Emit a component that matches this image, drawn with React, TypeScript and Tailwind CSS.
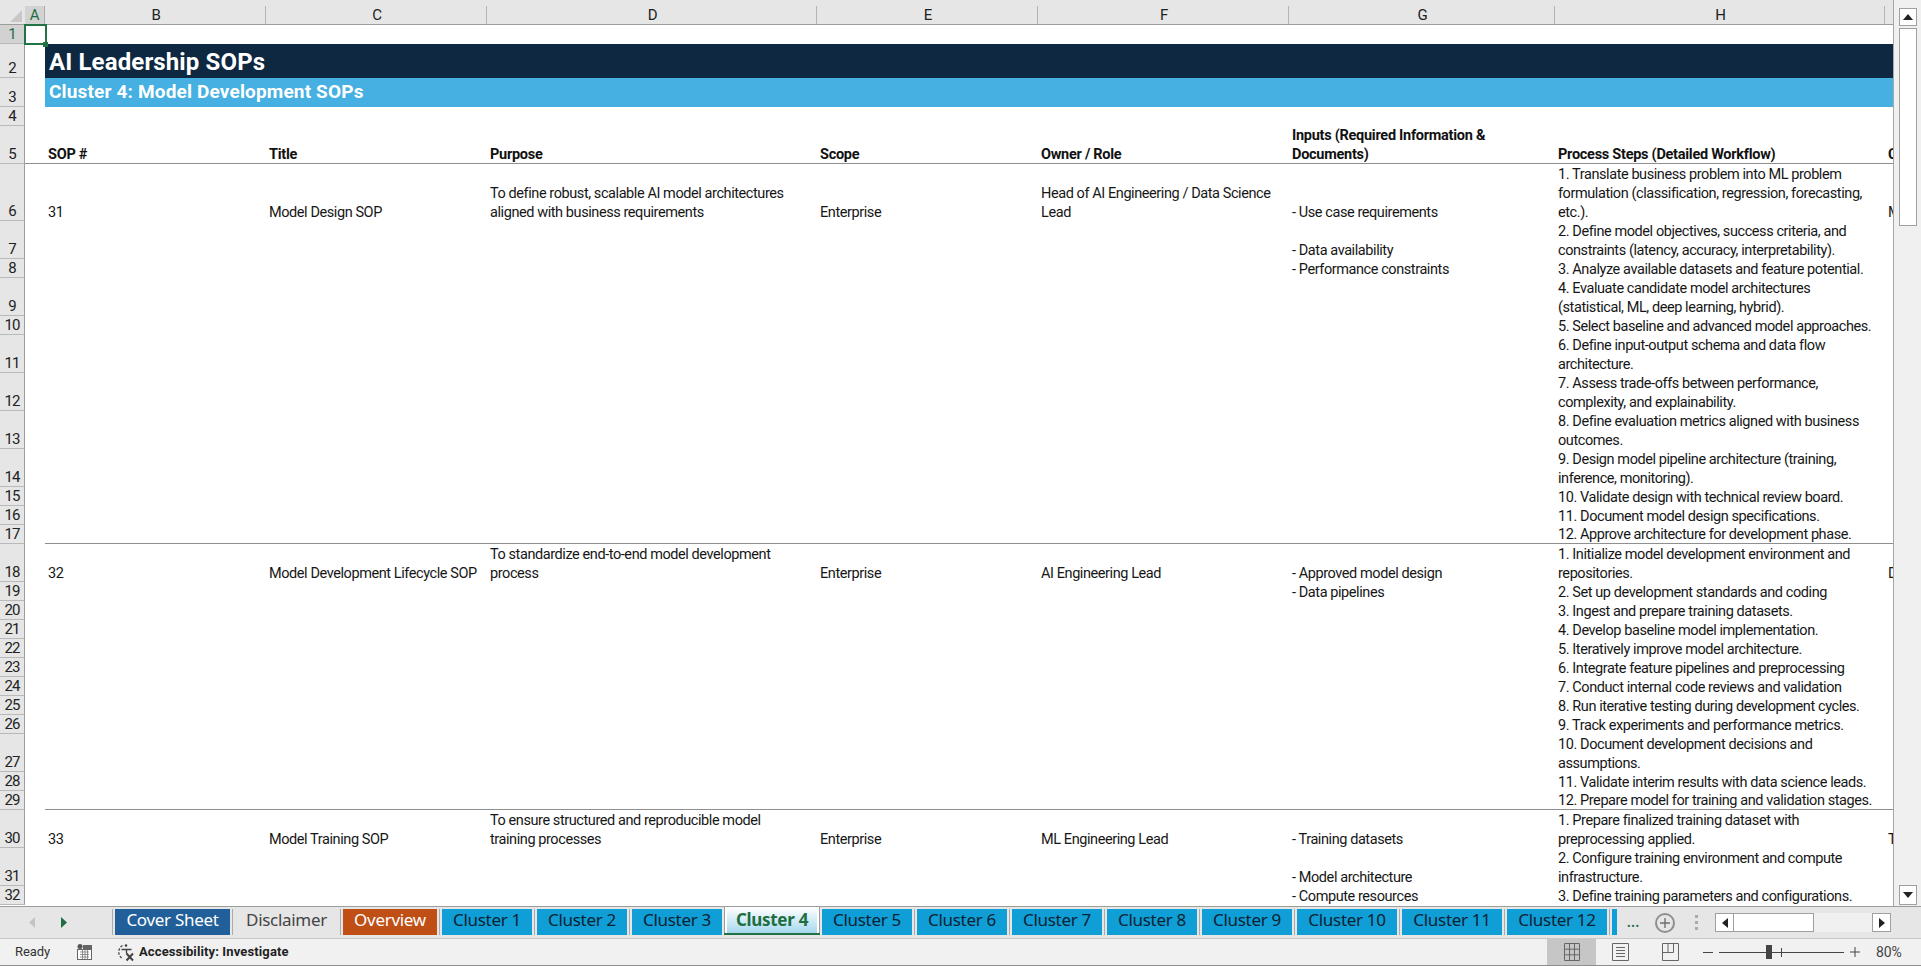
import React from 'react';

const FONT = "font-['Roboto','Liberation_Sans',sans-serif]";

type Row = {
  n: number;
  h: string;
  b?: string;
  c?: string;
  d?: string;
  e?: string;
  f?: string;
  g?: string;
  i?: string;
  steps?: string;
  line?: boolean;
};

const ROWS: Row[] = [
  {
    n: 6,
    h: 'h-[57px]',
    b: '31',
    c: 'Model Design SOP',
    d: 'To define robust, scalable AI model architectures\naligned with business requirements',
    e: 'Enterprise',
    f: 'Head of AI Engineering / Data Science\nLead',
    g: '- Use case requirements',
    i: 'M',
    steps: '1. Translate business problem into ML problem\nformulation (classification, regression, forecasting,\netc.).',
  },
  { n: 7, h: 'h-[38px]', g: '- Data availability', steps: '2. Define model objectives, success criteria, and\nconstraints (latency, accuracy, interpretability).' },
  { n: 8, h: 'h-[19px]', g: '- Performance constraints', steps: '3. Analyze available datasets and feature potential.' },
  { n: 9, h: 'h-[38px]', steps: '4. Evaluate candidate model architectures\n(statistical, ML, deep learning, hybrid).' },
  { n: 10, h: 'h-[19px]', steps: '5. Select baseline and advanced model approaches.' },
  { n: 11, h: 'h-[38px]', steps: '6. Define input-output schema and data flow\narchitecture.' },
  { n: 12, h: 'h-[38px]', steps: '7. Assess trade-offs between performance,\ncomplexity, and explainability.' },
  { n: 13, h: 'h-[38px]', steps: '8. Define evaluation metrics aligned with business\noutcomes.' },
  { n: 14, h: 'h-[38px]', steps: '9. Design model pipeline architecture (training,\ninference, monitoring).' },
  { n: 15, h: 'h-[19px]', steps: '10. Validate design with technical review board.' },
  { n: 16, h: 'h-[19px]', steps: '11. Document model design specifications.' },
  { n: 17, h: 'h-[19px]', steps: '12. Approve architecture for development phase.', line: true },
  {
    n: 18,
    h: 'h-[38px]',
    b: '32',
    c: 'Model Development Lifecycle SOP',
    d: 'To standardize end-to-end model development\nprocess',
    e: 'Enterprise',
    f: 'AI Engineering Lead',
    g: '- Approved model design',
    i: 'D',
    steps: '1. Initialize model development environment and\nrepositories.',
  },
  { n: 19, h: 'h-[19px]', g: '- Data pipelines', steps: '2. Set up development standards and coding' },
  { n: 20, h: 'h-[19px]', steps: '3. Ingest and prepare training datasets.' },
  { n: 21, h: 'h-[19px]', steps: '4. Develop baseline model implementation.' },
  { n: 22, h: 'h-[19px]', steps: '5. Iteratively improve model architecture.' },
  { n: 23, h: 'h-[19px]', steps: '6. Integrate feature pipelines and preprocessing' },
  { n: 24, h: 'h-[19px]', steps: '7. Conduct internal code reviews and validation' },
  { n: 25, h: 'h-[19px]', steps: '8. Run iterative testing during development cycles.' },
  { n: 26, h: 'h-[19px]', steps: '9. Track experiments and performance metrics.' },
  { n: 27, h: 'h-[38px]', steps: '10. Document development decisions and\nassumptions.' },
  { n: 28, h: 'h-[19px]', steps: '11. Validate interim results with data science leads.' },
  { n: 29, h: 'h-[19px]', steps: '12. Prepare model for training and validation stages.', line: true },
  {
    n: 30,
    h: 'h-[38px]',
    b: '33',
    c: 'Model Training SOP',
    d: 'To ensure structured and reproducible model\ntraining processes',
    e: 'Enterprise',
    f: 'ML Engineering Lead',
    g: '- Training datasets',
    i: 'T',
    steps: '1. Prepare finalized training dataset with\npreprocessing applied.',
  },
  { n: 31, h: 'h-[38px]', g: '- Model architecture', steps: '2. Configure training environment and compute\ninfrastructure.' },
  { n: 32, h: 'h-[19px]', g: '- Compute resources', steps: '3. Define training parameters and configurations.' },
];

const TABS = [
  { label: 'Cover Sheet', cls: 'w-[115px] bg-[#215f9a] text-white' },
  { label: 'Disclaimer', cls: 'w-[103px] text-[#444444]' },
  { label: 'Overview', cls: 'w-[94px] bg-[#c04f15] text-white' },
];

const CLUSTERS_B = ['Cluster 5', 'Cluster 6', 'Cluster 7', 'Cluster 8', 'Cluster 9'];
const CLUSTERS_C = ['Cluster 10', 'Cluster 11', 'Cluster 12'];

const COLUMNS = [
  { l: 'B', w: 'w-[221px]' },
  { l: 'C', w: 'w-[221px]' },
  { l: 'D', w: 'w-[330px]' },
  { l: 'E', w: 'w-[221px]' },
  { l: 'F', w: 'w-[251px]' },
  { l: 'G', w: 'w-[266px]' },
  { l: 'H', w: 'w-[330px]' },
];

const Cell = ({ w, children, bold }: { w: string; children?: React.ReactNode; bold?: boolean }) => (
  <div
    className={`${w} shrink-0 h-full flex items-end pl-[3px] whitespace-pre overflow-visible leading-[19px] ${
      bold ? 'font-bold tracking-[-0.27px]' : ''
    }`}
  >
    <div className="translate-y-[1px]">{children}</div>
  </div>
);

const RowHead = ({ n, cls, selected }: { n: number; cls: string; selected?: boolean }) => (
  <div
    className={`${cls} w-[25px] shrink-0 flex items-end justify-center border-r border-b border-r-[#9c9c9c] border-b-[#b9b9b9] text-[15px] leading-[19px] tracking-[-0.9px] ${
      selected ? 'bg-[#d2d2d2] text-[#1e6e42]' : 'bg-[#e6e6e6] text-[#222222]'
    }`}
  >
    <span className="translate-y-[1px]">{n}</span>
  </div>
);

const ClusterTab = ({ label, w }: { label: string; w: string }) => (
  <div className={`${w} h-full flex items-center justify-center bg-[#0f9ed5] text-[#0b2233] pb-[4px]`}>{label}</div>
);

const App: React.FC = () => {
  return (
    <div className={`${FONT} w-[1921px] h-[966px] overflow-hidden flex flex-col bg-white text-[#161616] text-[14.5px] tracking-[-0.42px]`}>
      <div className="flex-1 min-h-0 flex">
        <div className="w-[1893px] shrink-0 flex flex-col overflow-hidden">
          {/* column letters */}
          <div className="h-[25px] shrink-0 flex bg-[#e6e6e6] border-b border-[#9c9c9c] text-[15px] tracking-[-0.2px] text-[#222222]">
            <div className="w-[25px] shrink-0 flex items-start pl-[10px] pt-[10px]">
              <div className="w-0 h-0 border-l-[12px] border-l-transparent border-b-[12px] border-b-[#c8c8c8]" />
            </div>
            <div className="w-[20px] shrink-0 mt-[6px] flex items-center justify-center bg-[#d2d2d2] text-[#1e6e42] border-r border-[#ababab]">A</div>
            {COLUMNS.map((c) => (
              <div key={c.l} className={`${c.w} shrink-0 mt-[6px] pl-[2px] flex items-center justify-center border-r border-[#b4b4b4]`}>
                {c.l}
              </div>
            ))}
          </div>

          {/* row 1 */}
          <div className="h-[19px] shrink-0 flex">
            <RowHead n={1} cls="h-full" selected />
            <div className="relative w-[20px] h-full z-10">
              <div className="absolute -left-[1px] -top-[1px] w-[23px] h-[21px] border-2 border-[#217346]" />
              <div className="absolute left-[18px] top-[17px] w-[5px] h-[5px] bg-[#217346]" />
            </div>
          </div>

          {/* title bands */}
          <div className="h-[34px] shrink-0 flex">
            <RowHead n={2} cls="h-full" />
            <div className="w-[20px] shrink-0" />
            <div className="flex-1 bg-[#0e2841] text-white text-[24px] font-bold tracking-[0.13px] flex items-center pl-[4px]">
              <span className="translate-y-[1px]">AI Leadership SOPs</span>
            </div>
          </div>
          <div className="h-[29px] shrink-0 flex">
            <RowHead n={3} cls="h-full" />
            <div className="w-[20px] shrink-0" />
            <div className="flex-1 bg-[#45b0e1] text-white text-[19px] font-bold tracking-[0.16px] flex items-center pl-[4px]">Cluster 4: Model Development SOPs</div>
          </div>
          <div className="h-[19px] shrink-0 flex">
            <RowHead n={4} cls="h-full" />
          </div>

          {/* header row */}
          <div className="h-[38px] shrink-0 flex">
            <RowHead n={5} cls="h-full" />
            <div className="w-[20px] shrink-0 border-b border-[#8f8f8f]" />
            <div className="flex flex-1 h-full border-b border-[#8f8f8f] text-[#111111]">
              <Cell w="w-[221px]" bold>SOP #</Cell>
              <Cell w="w-[221px]" bold>Title</Cell>
              <Cell w="w-[330px]" bold>Purpose</Cell>
              <Cell w="w-[221px]" bold>Scope</Cell>
              <Cell w="w-[251px]" bold>Owner / Role</Cell>
              <Cell w="w-[266px]" bold>{'Inputs (Required Information &\nDocuments)'}</Cell>
              <Cell w="w-[330px]" bold>Process Steps (Detailed Workflow)</Cell>
              <Cell w="w-[20px]" bold>C</Cell>
            </div>
          </div>

          {/* data rows */}
          {ROWS.map((r) => (
            <div key={r.n} className={`${r.h} shrink-0 flex`}>
              <RowHead n={r.n} cls="h-full" />
              <div className="w-[20px] shrink-0" />
              <div className={`flex flex-1 h-full ${r.line ? 'border-b border-[#8f8f8f]' : ''}`}>
                <Cell w="w-[221px]">{r.b}</Cell>
                <Cell w="w-[221px]">{r.c}</Cell>
                <Cell w="w-[330px]">{r.d}</Cell>
                <Cell w="w-[221px]">{r.e}</Cell>
                <Cell w="w-[251px]">{r.f}</Cell>
                <Cell w="w-[266px]">{r.g}</Cell>
                <Cell w="w-[330px]">{r.steps}</Cell>
                <Cell w="w-[20px]">{r.i}</Cell>
              </div>
            </div>
          ))}
        </div>

        {/* vertical scrollbar */}
        <div className="flex-1 flex flex-col items-center bg-[#f0f0f0] border-l border-[#a6a6a6] pt-[8px] pb-[1px]">
          <div className="w-[18px] h-[18px] bg-white border border-[#a0a0a0] flex items-center justify-center">
            <svg width="10" height="6" viewBox="0 0 10 6"><path d="M5 0 10 6H0z" fill="#222" /></svg>
          </div>
          <div className="w-[18px] h-[198px] mt-[2px] bg-white border border-[#a0a0a0]" />
          <div className="flex-1" />
          <div className="w-[18px] h-[20px] bg-white border border-[#a0a0a0] flex items-center justify-center">
            <svg width="10" height="6" viewBox="0 0 10 6"><path d="M0 0h10L5 6z" fill="#222" /></svg>
          </div>
        </div>
      </div>

      {/* sheet tabs */}
      <div className="h-[33px] shrink-0 flex bg-[#e6e6e6] border-t border-[#9c9c9c] border-b border-b-[#c8c8c8] text-[17px] font-['Noto_Sans','Open_Sans',sans-serif] tracking-[-0.3px]">
        <div className="w-[112px] shrink-0 flex items-center pl-[29px] gap-[24px]">
          <svg width="7" height="11" viewBox="0 0 7 11"><path d="M6 0v11L0 5.500z" fill="#c4c4c4" /></svg>
          <svg width="7" height="11" viewBox="0 0 7 11"><path d="M1 0v11l6-5.500z" fill="#1e6e42" /></svg>
        </div>
        <div className="h-[26px] mt-[2px] flex items-stretch gap-[2px]">
          <div className="w-[1px] bg-[#ababab]" />
          {TABS.map((t) => (
            <React.Fragment key={t.label}>
              <div className={`${t.cls} flex items-center justify-center pb-[4px]`}>{t.label}</div>
              <div className="w-[1px] bg-[#ababab]" />
            </React.Fragment>
          ))}
          <ClusterTab label="Cluster 1" w="w-[90px]" />
          <div className="w-[1px] bg-[#ababab]" />
          <ClusterTab label="Cluster 2" w="w-[90px]" />
          <div className="w-[1px] bg-[#ababab]" />
          <ClusterTab label="Cluster 3" w="w-[90px]" />
          <div className="w-[96px] -mt-[3px] h-[29px] bg-white border-x border-x-[#9c9c9c] border-t border-t-[#9c9c9c] flex flex-col">
            <div className="flex-1 mx-[2px] bg-gradient-to-b from-white to-[#a5d8ef] flex items-center justify-center font-bold text-[#1e6e42]">
              Cluster 4
            </div>
            <div className="h-[2px] -mx-[1px] bg-[#217346]" />
          </div>
          {CLUSTERS_B.map((c) => (
            <React.Fragment key={c}>
              <ClusterTab label={c} w="w-[90px]" />
              <div className="w-[1px] bg-[#ababab]" />
            </React.Fragment>
          ))}
          {CLUSTERS_C.map((c) => (
            <React.Fragment key={c}>
              <ClusterTab label={c} w="w-[100px]" />
              <div className="w-[1px] bg-[#ababab]" />
            </React.Fragment>
          ))}
          <div className="w-[5px] bg-[#0f9ed5]" />
        </div>
        <div className="flex items-center ml-[8px] h-full text-[#1e6e42] pb-[3px]">
          <span className="w-[16px] text-center">...</span>
        </div>
        <div className="flex items-center ml-[14px]">
          <div className="w-[20px] h-[20px] rounded-full border-2 border-[#8f8f8f] flex items-center justify-center">
            <svg width="10" height="10" viewBox="0 0 10 10"><path d="M5 0v10M0 5h10" stroke="#6f6f6f" strokeWidth="1.4" /></svg>
          </div>
        </div>
        <div className="flex flex-col justify-center gap-[3px] ml-[20px]">
          <div className="w-[3px] h-[3px] bg-[#ababab]" />
          <div className="w-[3px] h-[3px] bg-[#ababab]" />
          <div className="w-[3px] h-[3px] bg-[#ababab]" />
        </div>
        <div className="ml-[17px] w-[176px] h-[19px] mt-[6px] flex bg-[#f0f0f0]">
          <div className="w-[19px] bg-white border border-[#a0a0a0] flex items-center justify-center">
            <svg width="6" height="10" viewBox="0 0 6 10"><path d="M6 0v10L0 5z" fill="#222" /></svg>
          </div>
          <div className="w-[80px] bg-white border border-l-0 border-[#a0a0a0]" />
          <div className="flex-1" />
          <div className="w-[19px] bg-white border border-[#a0a0a0] flex items-center justify-center">
            <svg width="6" height="10" viewBox="0 0 6 10"><path d="M0 0v10l6-5z" fill="#222" /></svg>
          </div>
        </div>
      </div>

      {/* status bar */}
      <div className="h-[27px] shrink-0 flex items-center bg-[#f1f1f1] border-b border-[#8f8f8f] text-[13px] text-[#333333] tracking-[-0.1px]">
        <span className="ml-[15px] w-[62px]">Ready</span>
        <svg width="15" height="16" viewBox="0 0 15 16">
          <circle cx="3" cy="2.500" r="2.500" fill="#555" />
          <rect x="6" y="1" width="9" height="4" fill="#666" />
          <rect x="0.500" y="5.500" width="14" height="10" fill="#fff" stroke="#666" />
          <path d="M3 8h9M3 10.500h9M3 13h9M5.500 6v9M8 6v9M10.500 6v9" stroke="#777" strokeWidth="0.8" />
        </svg>
        <svg className="ml-[24px]" width="20" height="20" viewBox="0 0 20 20" fill="none" stroke="#444" strokeWidth="1.3">
          <path d="M6.500 3.500a7.500 7.500 0 0 0 0 13" strokeDasharray="2.500 1.500" />
          <circle cx="10" cy="3.500" r="1.300" fill="#444" stroke="none" />
          <path d="M5.500 7.500h10M10.500 7.500v4" />
          <path d="M10.500 11.500l6.500 7M17 11.500l-6.500 7" strokeWidth="2" />
        </svg>
        <span className="ml-[3px] font-bold text-[#222222] tracking-[0.12px]">Accessibility: Investigate</span>
        <div className="flex-1" />
        <div className="w-[49px] h-full bg-[#c6c6c6] flex items-center justify-center">
          <svg width="16" height="18" viewBox="0 0 16 18" fill="none" stroke="#666"><path d="M.5.500h15v17H.5zM.5 6.200h15M.5 11.800h15M5.500.500v17M10.500.500v17" /></svg>
        </div>
        <svg className="ml-[16px]" width="17" height="18" viewBox="0 0 17 18" fill="none" stroke="#666"><path d="M.5.500h16v17H.5zM4 4.500h9M4 7.500h9M4 10.500h9M4 13.500h9" /></svg>
        <svg className="ml-[33px]" width="17" height="18" viewBox="0 0 17 18" fill="none" stroke="#666"><path d="M.5.500h16v17H.5zM.5 9.500h11V.500M6 .500v9" /></svg>
        <div className="ml-[24px] w-[10px] h-[1px] bg-[#444444]" />
        <div className="relative ml-[6px] w-[125px] h-[1px] bg-[#444444]">
          <div className="absolute left-[62px] -top-[4px] w-[1px] h-[9px] bg-[#444444]" />
          <div className="absolute left-[47px] -top-[7px] w-[6px] h-[14px] bg-[#444444]" />
        </div>
        <svg className="ml-[6px]" width="10" height="10" viewBox="0 0 10 10"><path d="M5 0v10M0 5h10" stroke="#444" /></svg>
        <span className="ml-[16px] w-[45px] text-[#444444] text-[14px]">80%</span>
      </div>
    </div>
  );
};

export default App;
